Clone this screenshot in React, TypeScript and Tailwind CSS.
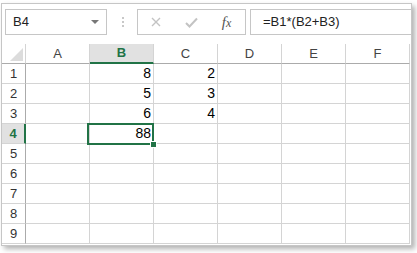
const cols = ["A", "B", "C", "D", "E", "F"];

const cells: Record<string, string> = {
  B1: "8",
  C1: "2",
  B2: "5",
  C2: "3",
  B3: "6",
  C3: "4",
  B4: "88",
};

function CornerCell() {
  return (
    <div className="w-[24px] h-[20px] border-r border-b border-r-[#d4d4d4] border-b-[#ababab] flex items-end justify-end pr-[2px] pb-[2px]">
      <svg width="13" height="13" viewBox="0 0 13 13">
        <polygon points="13,0 13,13 0,13" fill="#dcdcdc" />
      </svg>
    </div>
  );
}

function ColHeader({ name }: { name: string }) {
  const active = name === "B";
  return (
    <div
      className={
        active
          ? "w-[64px] h-[20px] border-r border-r-[#d4d4d4] border-b-2 border-b-[#217346] bg-[#e1e1e1] flex items-center justify-center text-[13px] font-bold text-[#217346]"
          : "w-[64px] h-[20px] border-r border-r-[#d4d4d4] border-b border-b-[#ababab] flex items-center justify-center text-[13px] text-[#444]"
      }>
      {name}
    </div>
  );
}

function RowHeader({ n }: { n: number }) {
  const active = n === 4;
  return (
    <div
      className={
        active
          ? "w-[24px] h-[20px] border-b border-b-[#d4d4d4] border-r-2 border-r-[#217346] bg-[#e1e1e1] flex items-center justify-center text-[13px] font-bold text-[#217346]"
          : "w-[24px] h-[20px] border-b border-b-[#d4d4d4] border-r border-r-[#ababab] flex items-center justify-center text-[13px] text-[#333]"
      }>
      {n}
    </div>
  );
}

function Cell({ id }: { id: string }) {
  const selected = id === "B4";
  return (
    <div className="relative w-[64px] h-[20px] border-r border-b border-[#d4d4d4] flex items-center justify-end pr-[2px] text-[14px] text-black">
      {cells[id]}
      {selected && (
        <div className="absolute z-10 left-[-3px] top-[-1px] w-[67px] h-[22px] border-2 border-[#217346]">
          <div className="absolute left-[61px] top-[16px] w-[7px] h-[7px] bg-[#217346] border border-white" />
        </div>
      )}
    </div>
  );
}

export default function App() {
  return (
    <div
      className="w-[417px] h-[253px] bg-white pt-[3px] pl-[1px]"
      style={{ fontFamily: '"Liberation Sans", Arial, sans-serif' }}>
      <div className="w-[411px] h-[243px] border border-[#c6c6c6] bg-white shadow-[3px_3px_5px_rgba(0,0,0,0.3)] flex flex-col">
        {/* formula bar */}
        <div className="flex h-[40px] pt-[5px] pl-[3px] items-start">
          <div className="w-[102px] h-[26px] border border-[#c6c6c6] flex items-center justify-between pl-[7px] pr-[7px] text-[13px] text-[#222]">
            <span>B4</span>
            <svg width="8" height="4" viewBox="0 0 8 4">
              <polygon points="0,0 8,0 4,4" fill="#777" />
            </svg>
          </div>
          <div className="w-[30px] h-[26px] flex flex-col items-center justify-center gap-[2px] pl-[1px]">
            <span className="w-[2px] h-[2px] bg-[#c8c8c8]" />
            <span className="w-[2px] h-[2px] bg-[#c8c8c8]" />
            <span className="w-[2px] h-[2px] bg-[#c8c8c8]" />
          </div>
          <div className="w-[109px] h-[26px] border border-[#c6c6c6] flex items-center">
            <span className="w-[36px] flex justify-center">
              <svg width="10" height="10" viewBox="0 0 10 10">
                <path d="M1 1 L9 9 M9 1 L1 9" stroke="#c3c3c3" strokeWidth="1.4" />
              </svg>
            </span>
            <span className="w-[34px] flex justify-center">
              <svg width="13" height="11" viewBox="0 0 13 11">
                <path d="M1 6 L4.5 9.5 L12 1.5" stroke="#c3c3c3" strokeWidth="2" fill="none" />
              </svg>
            </span>
            <span
              className="flex-1 flex justify-center items-baseline italic text-[#555]"
              style={{ fontFamily: '"Liberation Serif", "Times New Roman", serif' }}>
              <span className="text-[15px]">f</span>
              <span className="text-[12px]">x</span>
            </span>
          </div>
          <div className="flex-1 h-[26px] ml-[4px] border border-r-0 border-[#c6c6c6] flex items-center pl-[12px] text-[13px] text-[#222]">
            =B1*(B2+B3)
          </div>
        </div>

        {/* grid */}
        <div className="flex flex-col">
          <div className="flex">
            <CornerCell />
            {cols.map((c) => (
              <ColHeader key={c} name={c} />
            ))}
          </div>
          {[1, 2, 3, 4, 5, 6, 7, 8, 9].map((n) => (
            <div key={n} className="flex">
              <RowHeader n={n} />
              {cols.map((c) => (
                <Cell key={c} id={`${c}${n}`} />
              ))}
            </div>
          ))}
        </div>
      </div>
    </div>
  );
}
